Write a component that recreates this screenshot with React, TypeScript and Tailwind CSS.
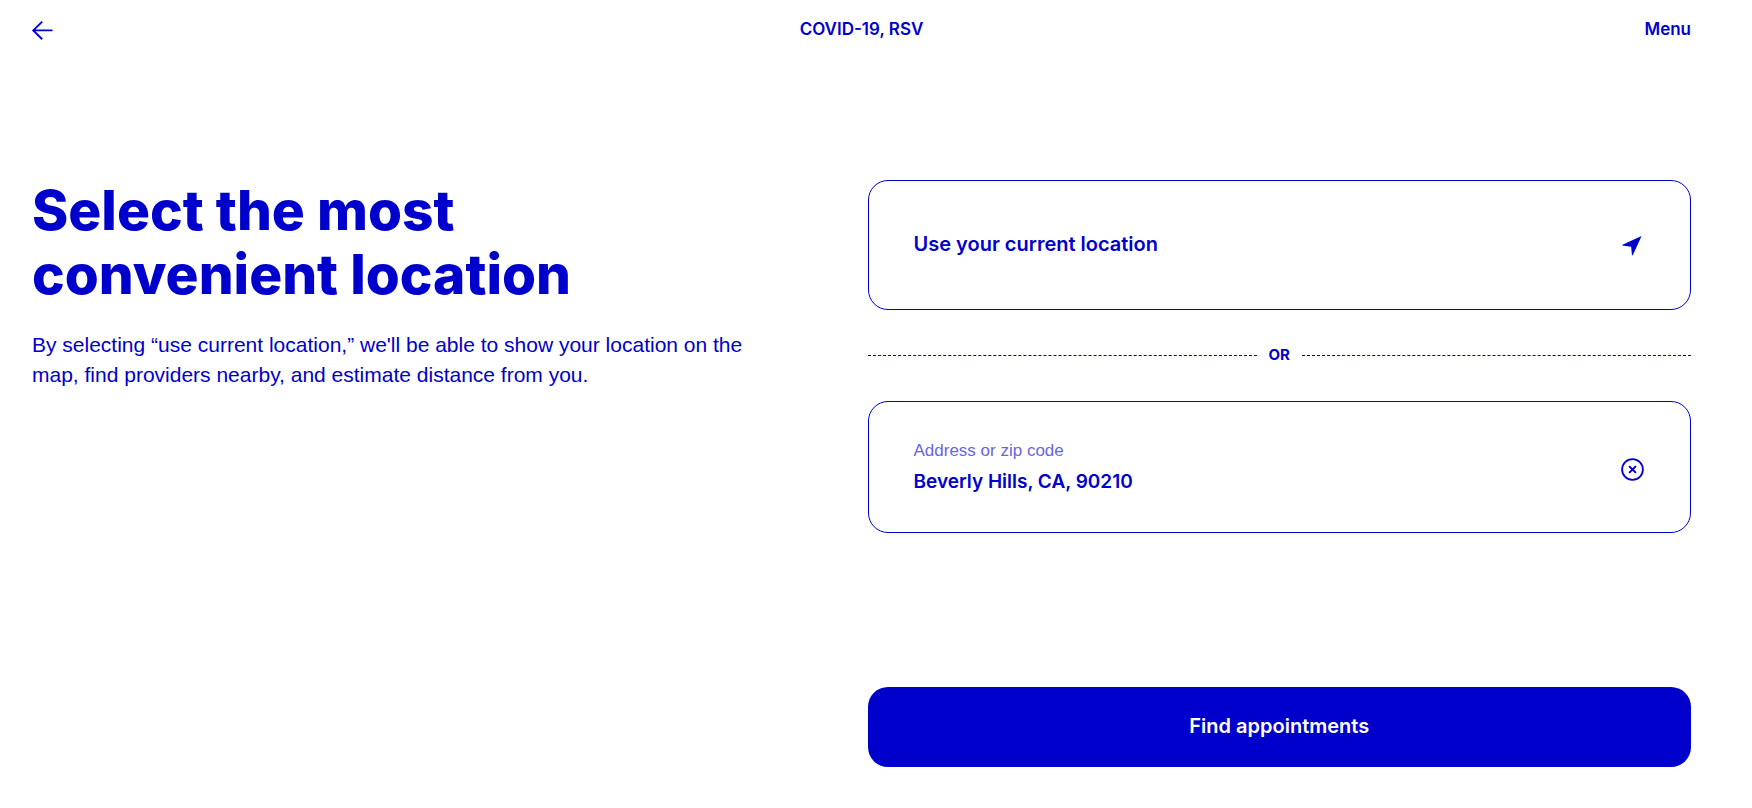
import { useRef, useState } from "react";

function BackArrow() {
  return (
    <svg viewBox="0 0 24 24" className="h-6 w-6" fill="none" stroke="currentColor" strokeWidth="1.9" aria-hidden="true">
      <path d="M22.6 12.4H3.2M12.2 3.6L3.3 12.4L12.2 21.2" />
    </svg>
  );
}

function LocationArrow() {
  return (
    <svg viewBox="0 0 24 24" className="h-6 w-6" fill="currentColor" aria-hidden="true">
      <path d="M20.6 4L11.8 23.2H11L10.1 14.8L1.4 13.6V12.8Z" />
    </svg>
  );
}

function ClearIcon() {
  return (
    <svg viewBox="0 0 24 24" className="h-6 w-6" fill="none" stroke="currentColor" strokeWidth="1.8" aria-hidden="true">
      <circle cx="11.5" cy="12.5" r="10.4" />
      <path d="M8.1 9.1L14.9 15.9M14.9 9.1L8.1 15.9" strokeWidth="2" />
    </svg>
  );
}

export default function App() {
  const [address, setAddress] = useState("Beverly Hills, CA, 90210");
  const addressRef = useRef<HTMLInputElement>(null);

  const clearAddress = () => {
    setAddress("");
    addressRef.current?.focus();
  };

  return (
    <div className="min-h-screen bg-white pr-[61px] pl-8 font-['Inter','Liberation_Sans',sans-serif] text-[#0000cc]">
      <header className="grid h-[60px] grid-cols-3 items-center">
        <button type="button" aria-label="Back" className="-ml-0.5 justify-self-start">
          <BackArrow />
        </button>
        <p className="justify-self-center text-[17px] font-semibold">COVID-19, RSV</p>
        <button type="button" className="justify-self-end text-[17px] font-semibold">
          Menu
        </button>
      </header>

      <main className="grid grid-cols-2 gap-3 pt-[120px] pb-10">
        <section className="-mt-0.5 pr-[72px]">
          <h1 className="max-w-[600px] text-[55px] leading-[64px] font-extrabold">
            Select the most convenient location
          </h1>
          <p className="mt-6 font-['Liberation_Sans',Arial,sans-serif] text-[21px] leading-[30px]">
            By selecting “use current location,” we'll be able to show your location on the map, find providers nearby,
            and estimate distance from you.
          </p>
        </section>

        <form onSubmit={(event) => event.preventDefault()}>
          <button
            type="button"
            className="flex h-[130px] w-full items-center justify-between rounded-[20px] border border-[#0000cc] px-[45px] pb-0.5 text-[20px] font-semibold"
          >
            Use your current location
            <LocationArrow />
          </button>

          <div className="flex h-[91px] items-center gap-3">
            <div className="flex-1 border-t border-dashed border-[#0000cc]" />
            <span className="text-[15px] font-bold">OR</span>
            <div className="flex-1 border-t border-dashed border-[#0000cc]" />
          </div>

          <div className="flex h-[132px] items-center justify-between rounded-[20px] border border-[#0000cc] px-[45px]">
            <div className="flex-1">
              <label
                htmlFor="address"
                className="block pt-0.5 font-['Liberation_Sans',Arial,sans-serif] text-[17px] leading-6 text-[#6666e0]"
              >
                Address or zip code
              </label>
              <input
                id="address"
                ref={addressRef}
                type="text"
                value={address}
                onChange={(event) => setAddress(event.target.value)}
                className="mt-0.5 block h-8 w-full text-[19px] font-semibold outline-none"
              />
            </div>
            <button type="button" aria-label="Clear address" onClick={clearAddress} className="pt-1">
              <ClearIcon />
            </button>
          </div>

          <button
            type="submit"
            className="mt-[154px] h-20 w-full rounded-[20px] bg-[#0000cc] pb-0.5 text-[20px] font-semibold text-white"
          >
            Find appointments
          </button>
        </form>
      </main>
    </div>
  );
}
